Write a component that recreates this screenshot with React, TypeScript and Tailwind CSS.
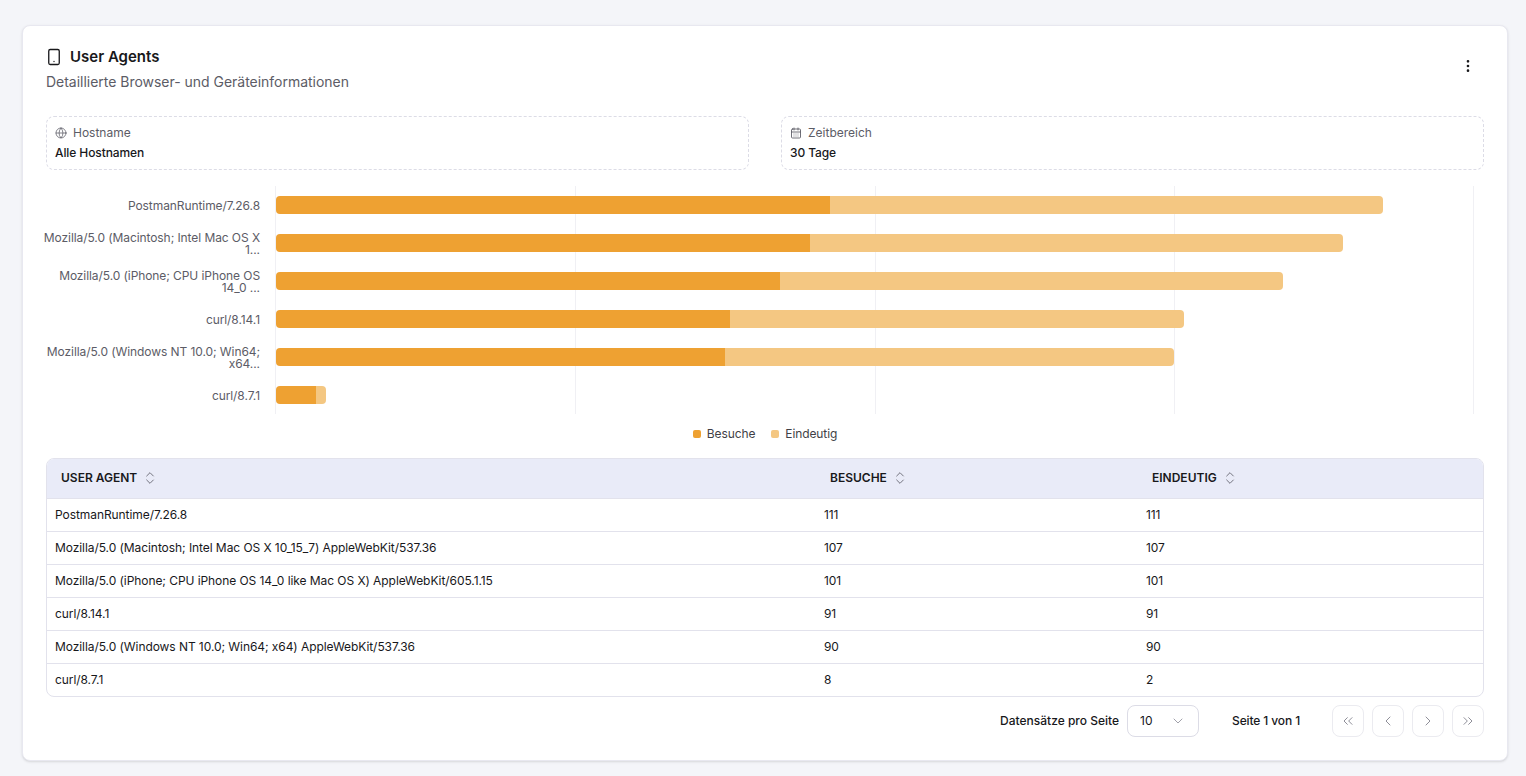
import { CalendarDays, ChevronDown, ChevronLeft, ChevronRight, ChevronsLeft, ChevronsRight, ChevronsUpDown, EllipsisVertical, Globe, Smartphone } from 'lucide-react';

const rows = [
  { name: 'PostmanRuntime/7.26.8', label: ['PostmanRuntime/7.26.8'], visits: 111, unique: 111 },
  { name: 'Mozilla/5.0 (Macintosh; Intel Mac OS X 10_15_7) AppleWebKit/537.36', label: ['Mozilla/5.0 (Macintosh; Intel Mac OS X', '1...'], visits: 107, unique: 107 },
  { name: 'Mozilla/5.0 (iPhone; CPU iPhone OS 14_0 like Mac OS X) AppleWebKit/605.1.15', label: ['Mozilla/5.0 (iPhone; CPU iPhone OS', '14_0 ...'], visits: 101, unique: 101 },
  { name: 'curl/8.14.1', label: ['curl/8.14.1'], visits: 91, unique: 91 },
  { name: 'Mozilla/5.0 (Windows NT 10.0; Win64; x64) AppleWebKit/537.36', label: ['Mozilla/5.0 (Windows NT 10.0; Win64;', 'x64...'], visits: 90, unique: 90 },
  { name: 'curl/8.7.1', label: ['curl/8.7.1'], visits: 8, unique: 2 },
];

const MAX = 240;

function Filter({ icon, label, value }: { icon: React.ReactNode; label: string; value: string }) {
  return (
    <div className="h-[54px] flex-1 rounded-lg border border-dashed border-[#dcdce6] px-2 pt-2">
      <div className="flex h-[15px] items-center gap-[6px] text-xs text-[#5c5c66]">
        {icon}
        <span>{label}</span>
      </div>
      <div className="mt-[5px] text-xs leading-[15px] font-medium tracking-[-0.1px] text-[#18181b]">{value}</div>
    </div>
  );
}

function PageButton({ children }: { children: React.ReactNode }) {
  return (
    <button className="flex h-8 w-8 items-center justify-center rounded-lg border border-[#ebebf0] text-[#8f8f99]">
      {children}
    </button>
  );
}

function HeadCell({ label, className }: { label: string; className: string }) {
  return (
    <div className={`flex items-center gap-[5px] text-xs font-semibold text-[#18181b] ${className}`}>
      <span>{label}</span>
      <ChevronsUpDown size={16} strokeWidth={1.25} className="text-[#5c5c66]" />
    </div>
  );
}

export default function App() {
  return (
    <div className="min-h-[776px] bg-[#f4f5f9] pt-[25px] pr-[18px] pl-[22px] font-['Inter',sans-serif]">
      <div className="h-[736px] rounded-lg border border-[#e8e8f0] bg-white px-[23px] pt-[21px] shadow-sm">
        <div className="flex items-start justify-between">
          <div>
            <div className="flex h-5 items-center gap-[7px]">
              <Smartphone size={18} strokeWidth={1.75} className="-ml-px text-[#18181b]" />
              <h1 className="text-[15px] font-semibold text-[#18181b]">User Agents</h1>
            </div>
            <p className="mt-[5px] text-sm leading-5 tracking-[-0.02px] text-[#5c5c66]">Detaillierte Browser- und Geräteinformationen</p>
          </div>
          <button className="mt-[11px] mr-2 text-[#18181b]">
            <EllipsisVertical size={16} />
          </button>
        </div>

        <div className="mt-[24px] flex gap-8">
          <Filter icon={<Globe size={12} strokeWidth={1.5} />} label="Hostname" value="Alle Hostnamen" />
          <Filter icon={<CalendarDays size={12} strokeWidth={1.75} />} label="Zeitbereich" value="30 Tage" />
        </div>

        <div className="relative mt-4 h-[228px]">
          <div className="absolute top-0 bottom-0 left-[229px] w-px bg-[#f0f0f4]" />
          <div className="absolute top-0 bottom-0 left-[529px] w-px bg-[#f0f0f4]" />
          <div className="absolute top-0 bottom-0 left-[829px] w-px bg-[#f0f0f4]" />
          <div className="absolute top-0 bottom-0 left-[1128px] w-px bg-[#f0f0f4]" />
          <div className="absolute top-0 bottom-0 left-[1427px] w-px bg-[#f0f0f4]" />
          {rows.map((row) => (
            <div key={row.name} className="relative flex h-[38px] items-center">
              <div className="flex w-[214px] shrink-0 flex-col items-end pt-[2px] text-xs leading-[12.5px] tracking-[-0.08px] whitespace-nowrap text-[#5c5c66]">
                {row.label.map((line) => (
                  <div key={line}>{line}</div>
                ))}
              </div>
              <div className="mr-[11px] ml-4 flex h-[18px] flex-1">
                <div className="rounded-l-[4px] bg-[#eea132]" style={{ width: `${(row.visits / MAX) * 100}%` }} />
                <div className="rounded-r-[4px] bg-[#f4c782]" style={{ width: `${(row.unique / MAX) * 100}%` }} />
              </div>
            </div>
          ))}
        </div>

        <div className="mt-3 flex h-[15px] items-center justify-center gap-4 text-xs tracking-[-0.1px] text-[#3f3f46]">
          <div className="flex items-center gap-[6px]">
            <span className="h-2 w-2 rounded-[2px] bg-[#eea132]" />
            Besuche
          </div>
          <div className="flex items-center gap-[6px]">
            <span className="h-2 w-2 rounded-[2px] bg-[#f4c782]" />
            Eindeutig
          </div>
        </div>

        <div className="mt-[17px] overflow-hidden rounded-lg border border-[#e2e2ec] text-xs text-[#18181b]">
          <div className="flex h-[39px] items-center bg-[#e9ebf8] pb-[2px]">
            <HeadCell label="USER AGENT" className="w-[769px] pl-[14px]" />
            <HeadCell label="BESUCHE" className="w-[322px] pl-[14px]" />
            <HeadCell label="EINDEUTIG" className="pl-[14px]" />
          </div>
          {rows.map((row) => (
            <div key={row.name} className="flex h-[33px] items-center border-t border-[#e2e2ec] tracking-[-0.07px]">
              <div className="w-[769px] pl-2">{row.name}</div>
              <div className="w-[322px] pl-2">{row.visits}</div>
              <div className="pl-2">{row.unique}</div>
            </div>
          ))}
        </div>

        <div className="mt-2 flex items-center justify-end text-xs text-[#18181b]">
          <span className="font-medium">Datensätze pro Seite</span>
          <div className="ml-2 flex h-8 w-[72px] items-center justify-between rounded-lg border border-[#dcdce6] pr-3 pl-3">
            <span>10</span>
            <ChevronDown size={16} strokeWidth={1.5} className="text-[#a1a1aa]" />
          </div>
          <span className="mr-8 ml-[33px] font-medium tracking-[-0.12px]">Seite 1 von 1</span>
          <div className="flex gap-2">
            <PageButton><ChevronsLeft size={16} strokeWidth={1.5} /></PageButton>
            <PageButton><ChevronLeft size={16} strokeWidth={1.5} /></PageButton>
            <PageButton><ChevronRight size={16} strokeWidth={1.5} /></PageButton>
            <PageButton><ChevronsRight size={16} strokeWidth={1.5} /></PageButton>
          </div>
        </div>
      </div>
    </div>
  );
}
